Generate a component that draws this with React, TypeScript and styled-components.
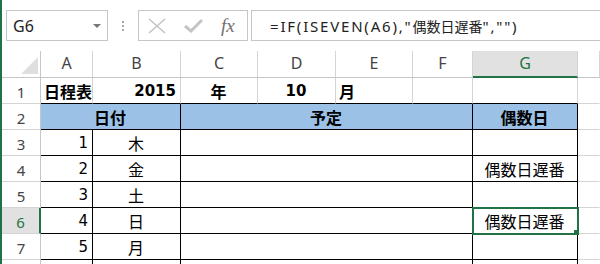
import React from 'react';
import styled, { createGlobalStyle, css } from 'styled-components';

const GRID = '#d4d4d4';
const HEAD_LINE = '#c6c6c6';
const BLACK = '#000000';
const EXCEL_GREEN = '#217346';
const HEADER_BLUE = '#9bc2e6';

const GlobalStyle = createGlobalStyle`
  html, body {
    margin: 0;
    padding: 0;
    background: #ffffff;
    overflow: hidden;
  }
`;

const Window = styled.div`
  display: flex;
  width: 600px;
  height: 264px;
  overflow: hidden;
  background: #ffffff;
`;

const EdgeStripe = styled.div`
  flex: none;
  width: 2px;
  background: ${EXCEL_GREEN};
`;

const Main = styled.div`
  flex: 1;
  min-width: 0;
  display: flex;
  flex-direction: column;
`;

const FormulaBar = styled.div`
  flex: none;
  height: 51px;
  box-sizing: border-box;
  padding: 10px 0 0 4px;
  display: flex;
  align-items: flex-start;
`;

const NameBox = styled.div`
  box-sizing: border-box;
  width: 102px;
  height: 31px;
  border: 1px solid #c6c6c6;
  padding: 0 6px;
  display: flex;
  align-items: center;
  justify-content: space-between;
  font-family: 'Noto Sans', sans-serif;
  font-size: 16px;
  color: #222;
`;

const DropArrow = styled.span`
  width: 0;
  height: 0;
  border-left: 4px solid transparent;
  border-right: 4px solid transparent;
  border-top: 4px solid #777;
`;

const Grip = styled.div`
  margin: 11px 14px 0 14px;
  display: flex;
  flex-direction: column;
  gap: 2px;

  span {
    width: 2px;
    height: 2px;
    background: #a6a6a6;
  }
`;

const ButtonBox = styled.div`
  box-sizing: border-box;
  width: 110px;
  height: 31px;
  border: 1px solid #c6c6c6;
  padding-left: 9px;
  display: flex;
  align-items: center;
  gap: 18px;
`;

const Fx = styled.span`
  font-family: 'Liberation Serif', serif;
  font-style: italic;
  font-size: 19px;
  color: #707070;
  line-height: 1;
  margin-top: -1px;
`;

const FormulaInput = styled.div`
  flex: 1;
  box-sizing: border-box;
  height: 31px;
  margin-left: 3px;
  border: 1px solid #c6c6c6;
  border-right: none;
  padding-left: 18px;
  display: flex;
  align-items: center;
  font-family: 'Noto Sans', 'Noto Sans CJK JP', sans-serif;
  font-size: 15px;
  letter-spacing: 1.8px;
  color: #222;
  white-space: nowrap;
`;

const FormulaKanji = styled.span`
  font-family: 'Noto Sans CJK JP', sans-serif;
  font-size: 14px;
  letter-spacing: 0;
`;

const Sheet = styled.div`
  display: grid;
  grid-template-columns: 39px 52px 88px 77px 78px 77px 60px 105px 1fr;
  grid-template-rows: 27px repeat(8, 26px);
`;

const Corner = styled.div`
  box-sizing: border-box;
  border-right: 1px solid ${HEAD_LINE};
  border-bottom: 1px solid ${HEAD_LINE};
  display: flex;
  align-items: flex-end;
  justify-content: flex-end;
  padding: 0 2px 3px 0;
`;

const ColHead = styled.div<{ $active?: boolean }>`
  box-sizing: border-box;
  display: flex;
  align-items: center;
  justify-content: center;
  padding-bottom: 2px;
  font-family: 'Noto Sans', sans-serif;
  font-size: 16px;
  color: #444;
  border-right: 1px solid ${GRID};
  border-bottom: 1px solid ${HEAD_LINE};
  ${(p) =>
    p.$active &&
    css`
      background: #e1e1e1;
      color: ${EXCEL_GREEN};
      border-bottom: 2px solid ${EXCEL_GREEN};
      padding-bottom: 1px;
    `}
`;

const RowHead = styled.div<{ $active?: boolean }>`
  box-sizing: border-box;
  display: flex;
  align-items: center;
  justify-content: center;
  padding-top: 2px;
  font-family: 'Noto Sans', sans-serif;
  font-size: 15px;
  color: #444;
  border-right: 1px solid ${HEAD_LINE};
  border-bottom: 1px solid ${GRID};
  ${(p) =>
    p.$active &&
    css`
      background: #e1e1e1;
      color: ${EXCEL_GREEN};
      border-right: 2px solid ${EXCEL_GREEN};
    `}
`;

type Align = 'left' | 'center' | 'right';

const Cell = styled.div<{
  $align?: Align;
  $bold?: boolean;
  $fill?: string;
  $right?: string;
  $bottom?: string;
  $span?: number;
  $selected?: boolean;
}>`
  box-sizing: border-box;
  grid-column: span ${(p) => p.$span ?? 1};
  display: flex;
  align-items: center;
  justify-content: ${(p) =>
    p.$align === 'right' ? 'flex-end' : p.$align === 'center' ? 'center' : 'flex-start'};
  padding: 1px 4px 0 3px;
  background: ${(p) => p.$fill ?? 'transparent'};
  border-right: 1px solid ${(p) => p.$right ?? GRID};
  border-bottom: 1px solid ${(p) => p.$bottom ?? GRID};
  font-family: 'DejaVu Sans', 'Noto Sans CJK JP', sans-serif;
  font-size: 15px;
  font-weight: ${(p) => (p.$bold ? 700 : 400)};
  color: #000;
  white-space: nowrap;
  ${(p) =>
    p.$selected &&
    css`
      position: relative;
      z-index: 1;
      outline: 2px solid ${EXCEL_GREEN};
      outline-offset: -1px;

      &::after {
        content: '';
        position: absolute;
        right: -2px;
        bottom: -2px;
        width: 5px;
        height: 5px;
        background: ${EXCEL_GREEN};
      }
    `}
`;

const Kanji = styled.span`
  font-family: 'Noto Sans CJK JP', sans-serif;
  font-size: 16px;
`;

const columns = ['A', 'B', 'C', 'D', 'E', 'F', 'G'];

const days = [
  { n: 3, day: '1', wd: '木', even: '' },
  { n: 4, day: '2', wd: '金', even: '偶数日遅番' },
  { n: 5, day: '3', wd: '土', even: '' },
  { n: 6, day: '4', wd: '日', even: '偶数日遅番', selected: true },
  { n: 7, day: '5', wd: '月', even: '' },
];

const App = () => {
  return (
    <>
      <GlobalStyle />
      <Window>
        <EdgeStripe />
        <Main>
          <FormulaBar>
            <NameBox>
              G6
              <DropArrow />
            </NameBox>
            <Grip>
              <span />
              <span />
              <span />
            </Grip>
            <ButtonBox>
              <svg width="18" height="16" viewBox="0 0 18 16">
                <path d="M1 1 L17 15 M17 1 L1 15" stroke="#c4c4c4" strokeWidth="1.6" fill="none" />
              </svg>
              <svg width="19" height="15" viewBox="0 0 19 15">
                <path d="M1 8 L7 13 L18 2" stroke="#c4c4c4" strokeWidth="3" fill="none" />
              </svg>
              <Fx>fx</Fx>
            </ButtonBox>
            <FormulaInput>
              =IF(ISEVEN(A6),"<FormulaKanji>偶数日遅番</FormulaKanji>","")
            </FormulaInput>
          </FormulaBar>

          <Sheet>
            <Corner>
              <svg width="17" height="17" viewBox="0 0 17 17">
                <polygon points="17,0 17,17 0,17" fill="#dfdfdf" />
              </svg>
            </Corner>
            {columns.map((c) => (
              <ColHead key={c} $active={c === 'G'}>
                {c}
              </ColHead>
            ))}
            <ColHead />

            {/* row 1: title line */}
            <RowHead>1</RowHead>
            <Cell $bold $bottom={BLACK}>
              <Kanji>日程表</Kanji>
            </Cell>
            <Cell $bold $align="right" $bottom={BLACK}>
              2015
            </Cell>
            <Cell $bold $align="center" $bottom={BLACK}>
              <Kanji>年</Kanji>
            </Cell>
            <Cell $bold $align="center" $bottom={BLACK}>
              10
            </Cell>
            <Cell $bold $bottom={BLACK}>
              <Kanji>月</Kanji>
            </Cell>
            <Cell $bottom={BLACK} />
            <Cell $bottom={BLACK} />
            <Cell $right="transparent" />

            {/* row 2: table header */}
            <RowHead>2</RowHead>
            <Cell $span={2} $bold $align="center" $fill={HEADER_BLUE} $right={BLACK} $bottom={BLACK}>
              <Kanji>日付</Kanji>
            </Cell>
            <Cell $span={4} $bold $align="center" $fill={HEADER_BLUE} $right={BLACK} $bottom={BLACK}>
              <Kanji>予定</Kanji>
            </Cell>
            <Cell $bold $align="center" $fill={HEADER_BLUE} $right={BLACK} $bottom={BLACK}>
              <Kanji>偶数日</Kanji>
            </Cell>
            <Cell $right="transparent" />

            {days.map((d) => (
              <React.Fragment key={d.n}>
                <RowHead $active={d.selected}>{d.n}</RowHead>
                <Cell $align="right" $right={BLACK} $bottom={BLACK}>
                  {d.day}
                </Cell>
                <Cell $align="center" $right={BLACK} $bottom={BLACK}>
                  <Kanji>{d.wd}</Kanji>
                </Cell>
                <Cell $span={4} $right={BLACK} $bottom={BLACK} />
                <Cell $align="center" $right={BLACK} $bottom={BLACK} $selected={d.selected}>
                  <Kanji>{d.even}</Kanji>
                </Cell>
                <Cell $right="transparent" />
              </React.Fragment>
            ))}

            {/* row 8: only its top edge is in view */}
            <RowHead />
            <Cell $right={BLACK} $bottom={BLACK} />
            <Cell $right={BLACK} $bottom={BLACK} />
            <Cell $span={4} $right={BLACK} $bottom={BLACK} />
            <Cell $right={BLACK} $bottom={BLACK} />
            <Cell $right="transparent" />
          </Sheet>
        </Main>
      </Window>
    </>
  );
};

export default App;
